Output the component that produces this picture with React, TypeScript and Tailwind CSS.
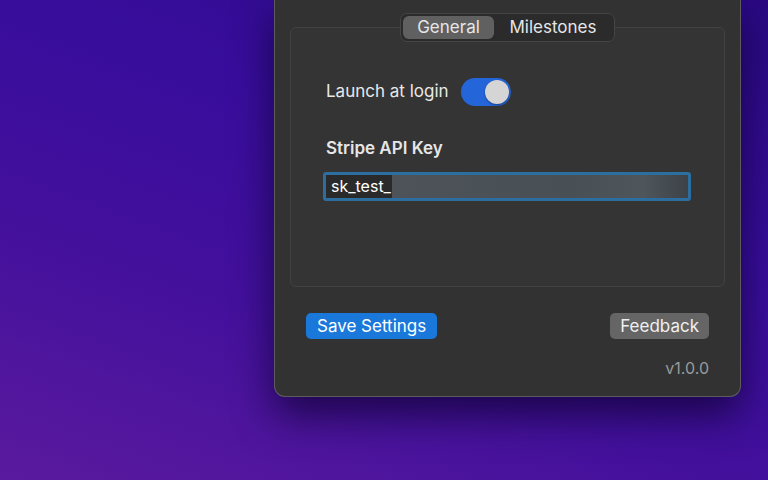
import { useState } from 'react';

export default function App() {
  const [tab, setTab] = useState('general');
  const [launch, setLaunch] = useState(true);

  return (
    <div
      className="w-[768px] h-[480px] overflow-hidden flex items-start pl-[274px] bg-[linear-gradient(200deg,#2a0982_0%,#380d9c_35%,#43109c_65%,#5a1a9e_100%)]"
      style={{ fontFamily: 'Inter, "Noto Sans", sans-serif' }}
    >
      <div className="w-[467px] h-[397px] bg-[#323232] rounded-b-[11px] border-x border-b border-[#5c5c5c] shadow-[0_18px_40px_rgba(10,0,40,0.7)] flex flex-col pt-[13px] px-[15px]">
        <div className="relative z-10 self-center flex h-[29px] w-[215px] p-[2px] rounded-[7px] bg-[#2b2b2b] border border-[#454545] text-[17px] text-[#e6e6e6]">
          <button
            onClick={() => setTab('general')}
            className={`w-[91px] rounded-[6px] leading-none ${tab === 'general' ? 'bg-[#606060]' : ''}`}
          >
            General
          </button>
          <button
            onClick={() => setTab('milestones')}
            className={`flex-1 rounded-[6px] leading-none ${tab === 'milestones' ? 'bg-[#606060]' : ''}`}
          >
            Milestones
          </button>
        </div>

        <div className="-mt-[15px] h-[260px] rounded-[6px] border border-[#424242] bg-[#343434] pl-[35px] pr-[34px] pt-[49px]">
          <div className="flex items-center gap-[12px] h-[30px]">
            <span className="text-[17px] text-[#e8e8e8]">Launch at login</span>
            <button
              onClick={() => setLaunch(!launch)}
              className={`w-[50px] h-[28px] rounded-full p-[2px] flex ${launch ? 'bg-[#2466d9] justify-end' : 'bg-[#555] justify-start'}`}
            >
              <span className="w-[24px] h-[24px] rounded-full bg-[#d5d5d5] shadow-[0_1px_2px_rgba(0,0,0,0.4)]" />
            </button>
          </div>

          <div className="mt-[29px] text-[17px] font-semibold text-[#e6e6e6]">Stripe API Key</div>

          <div className="mt-[10px] -ml-[3px] w-[368px] h-[29px] rounded-[3px] border-[3px] border-[#2b6e9f] flex overflow-hidden">
            <span className="bg-[#2a2a2a] text-white text-[16px] leading-[23px] pl-[5px] pr-[1px]">sk_test_</span>
            <div className="flex-1 bg-[linear-gradient(90deg,#4d5359_0%,#495055_60%,#4f565b_85%,#3c4247_100%)]" />
          </div>
        </div>

        <div className="mt-[26px] px-[16px] flex justify-between">
          <button className="h-[26px] px-[11px] rounded-[5px] bg-[#1a78db] text-[17px] text-white leading-none">
            Save Settings
          </button>
          <button className="h-[26px] px-[10px] rounded-[5px] bg-[#656565] text-[17px] text-[#f0f0f0] leading-none">
            Feedback
          </button>
        </div>

        <div className="mt-[17px] px-[16px] text-right text-[16px] text-[#9a9a9a]">v1.0.0</div>
      </div>
    </div>
  );
}
